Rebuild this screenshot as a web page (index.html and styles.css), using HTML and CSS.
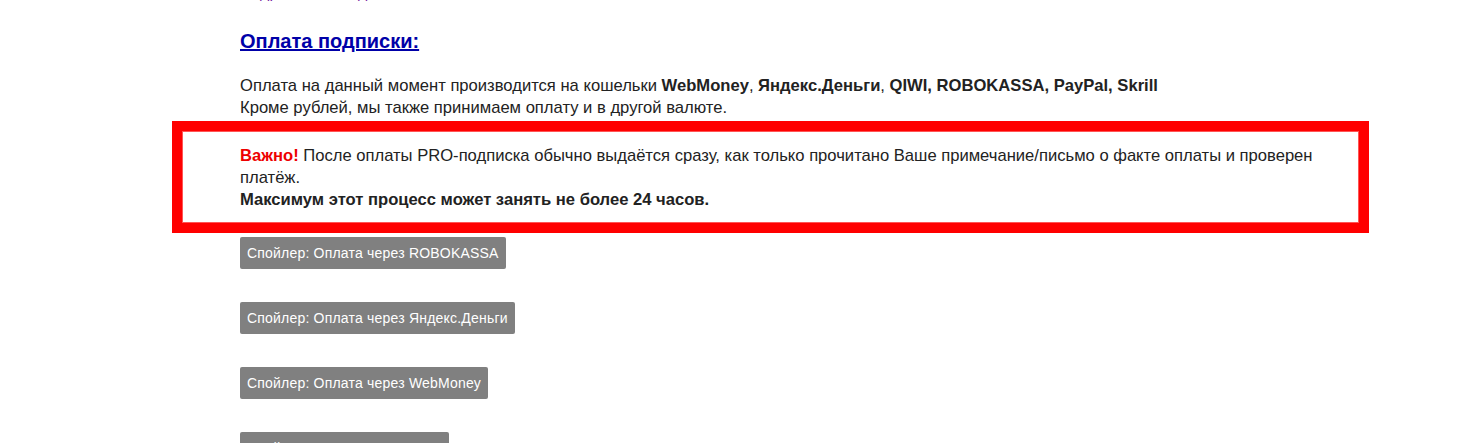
FILE: index.html
```html
<!DOCTYPE html>
<html lang="ru">
<head>
<meta charset="utf-8">
<title>Оплата подписки</title>
<link rel="stylesheet" href="styles.css">
</head>
<body>
<div class="page">
  <p class="cut">Подробнее о подписке</p>
  <h2 class="title"><a href="#">Оплата подписки:</a></h2>
  <p class="text">Оплата на данный момент производится на кошельки <b>WebMoney</b>, <b>Яндекс.Деньги</b>, <b>QIWI, ROBOKASSA, PayPal, Skrill</b><br>Кроме рублей, мы также принимаем оплату и в другой валюте.</p>
  <div class="notice">
    <p class="text"><b class="red">Важно!</b> После оплаты PRO-подписка обычно выдаётся сразу, как только прочитано Ваше примечание/письмо о факте оплаты и проверен платёж.<br><b>Максимум этот процесс может занять не более 24 часов.</b></p>
  </div>
  <div class="spoilers">
    <button class="spoiler">Спойлер: Оплата через ROBOKASSA</button>
    <button class="spoiler">Спойлер: Оплата через Яндекс.Деньги</button>
    <button class="spoiler">Спойлер: Оплата через WebMoney</button>
    <button class="spoiler">Спойлер: Оплата через QIWI</button>
  </div>
</div>
</body>
</html>
```
FILE: styles.css
```css
html, body {
  margin: 0;
  padding: 0;
  background: #ffffff;
}
body {
  font-family: "Liberation Sans", Arial, sans-serif;
  color: #222222;
  overflow: hidden;
}
.page {
  padding-left: 240px;
  width: 1129px;
}
.cut {
  margin: -18px 0 0 0;
  font-size: 16px;
  line-height: 22px;
  color: #7a1fa2;
}
.title {
  margin: 25px 0 0 0;
  font-size: 20px;
  line-height: 24px;
  font-weight: bold;
}
.title a {
  color: #0000a8;
  text-decoration: underline;
}
.text {
  margin: 0;
  font-size: 16.6px;
  line-height: 22px;
  color: #222222;
}
.page > .text {
  margin-top: 22px;
}
.red {
  color: #ee0000;
}
.notice {
  margin: 2px 0 0 -68px;
  border: 10px solid #ff0000;
  box-shadow: inset 0 0 0 1px #ff5555;
  padding: 14px 36px 12px 58px;
}
.spoilers {
  display: flex;
  flex-direction: column;
  align-items: flex-start;
  gap: 33px;
  margin-top: 4px;
}
.spoiler {
  font-family: "Liberation Sans", Arial, sans-serif;
  font-size: 14px;
  letter-spacing: 0.2px;
  line-height: 18px;
  color: #ffffff;
  background: #808080;
  border: none;
  border-radius: 2px;
  padding: 7px 7px;
  height: 32px;
  cursor: pointer;
}
```
